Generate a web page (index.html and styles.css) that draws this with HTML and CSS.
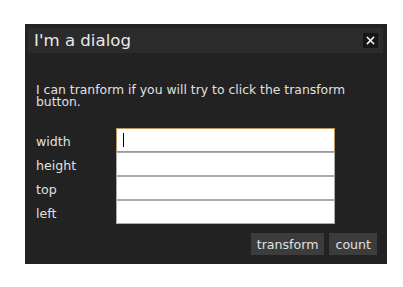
FILE: index.html
```html
<!DOCTYPE html>
<html>
<head>
<meta charset="utf-8">
<link rel="stylesheet" href="styles.css">
</head>
<body>
<div class="dialog">
  <div class="titlebar">
    <span class="title">I'm a dialog</span>
    <span class="close"><svg width="15" height="15" viewBox="0 0 15 15"><path d="M4.5 4.5L10.5 10.5M10.5 4.5L4.5 10.5" stroke="#f2f2f2" stroke-width="1.6" stroke-linecap="square"/></svg></span>
  </div>
  <div class="content">
    <p class="msg">I can tranform if you will try to click the transform button.</p>
    <div class="form">
      <label class="lbl">width</label><input class="inp focus" type="text" autofocus>
      <label class="lbl">height</label><input class="inp" type="text">
      <label class="lbl">top</label><input class="inp" type="text">
      <label class="lbl">left</label><input class="inp" type="text">
    </div>
    <div class="buttons">
      <button class="btn">transform</button>
      <button class="btn">count</button>
    </div>
  </div>
</div>
</body>
</html>
```
FILE: styles.css
```css
html, body { margin: 0; padding: 0; background: #fff; }
body { padding: 24px 0 0 25px; font-family: "DejaVu Sans", Verdana, sans-serif; }
.dialog {
  width: 362px;
  height: 240px;
  background: #222222;
  box-sizing: border-box;
  padding: 4px 4px 0 3px;
  display: flex;
  flex-direction: column;
}
.titlebar {
  height: 25px;
  background: #2b2b2b;
  display: flex;
  align-items: center;
  justify-content: space-between;
  padding: 0 5px 0 6px;
}
.title { color: #e8e8e8; font-size: 16.6px; }
.close {
  width: 15px; height: 15px;
  background: #161616;
  display: block;
}
.close svg { display: block; }
.content { padding: 31px 8px 0 8px; }
.msg { margin: 0; color: #e0e0e0; font-size: 12.4px; line-height: 12px; }
.form {
  margin-top: 20px;
  display: grid;
  grid-template-columns: 80px 219px;
  grid-auto-rows: 24px;
}
.lbl { color: #e0e0e0; font-size: 12.6px; display: flex; align-items: center; padding-top: 2px; }
.inp {
  margin: 0; box-sizing: border-box; height: 24px; width: 219px;
  border: 1px solid #aaa; background: #fff; padding: 0 6px; outline: none;
  caret-color: #000;
}
.inp.focus {
  border-color: #b8975a;
  background: linear-gradient(#000, #000) 6px 4px / 1px 14px no-repeat, #fff;
}
.buttons { display: flex; justify-content: flex-end; gap: 5px; margin-top: 9px; margin-right: -2px; }
.btn {
  height: 22px; background: #3c3c3c; color: #e0e0e0; border: 0;
  font-family: "DejaVu Sans", Verdana, sans-serif; font-size: 12.6px; padding: 0 6px; margin: 0;
}
```
